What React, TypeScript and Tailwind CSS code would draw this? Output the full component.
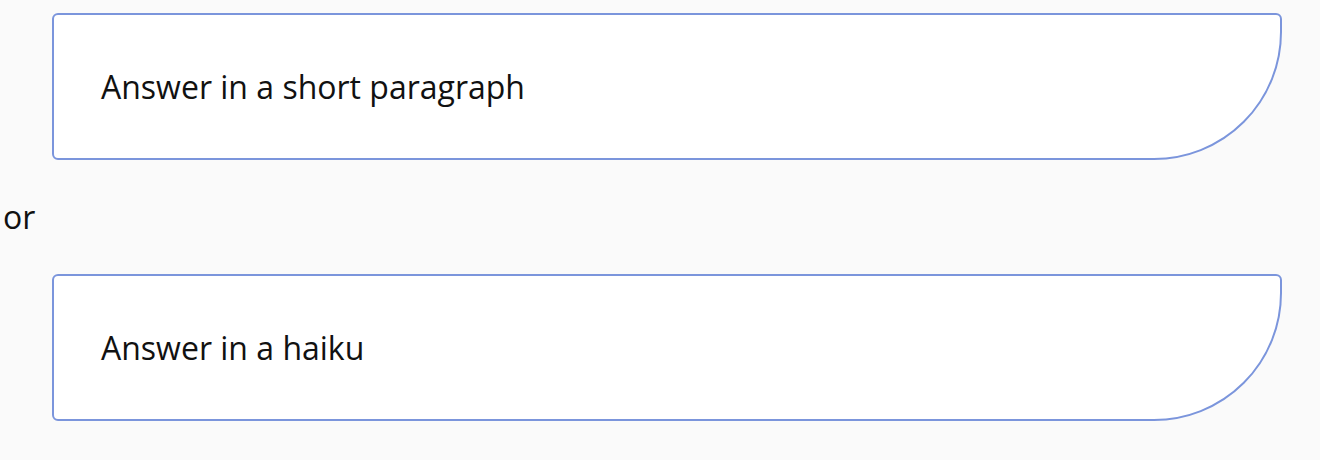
const options = ["Answer in a short paragraph", "Answer in a haiku"];

function OptionBox({ label }: { label: string }) {
  return (
    <div className="ml-[49px] w-[1230px] h-[147px] bg-white border-2 border-[#7b95dc] rounded-md rounded-br-[128px] pl-[47px] pr-12 pt-[50px]">
      <p className="text-[32px] leading-[44px] text-[#111111]">{label}</p>
    </div>
  );
}

export default function App() {
  return (
    <div
      className="min-h-[460px] w-full bg-[#fafafa] pl-[3px] pt-[13px]"
      style={{ fontFamily: '"Open Sans", "Noto Sans", sans-serif' }}
    >
      <OptionBox label={options[0]} />
      <p className="mt-[35px] mb-[35px] text-[32px] leading-[44px] text-[#111111]">or</p>
      <OptionBox label={options[1]} />
    </div>
  );
}
